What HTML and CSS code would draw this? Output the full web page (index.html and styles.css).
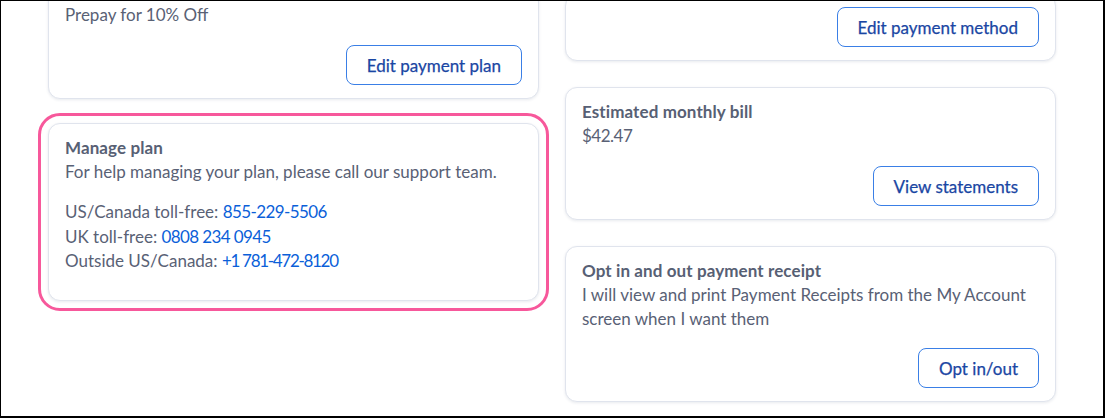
FILE: index.html
```html
<!DOCTYPE html>
<html lang="en">
<head>
<meta charset="utf-8">
<title>Billing</title>
<link rel="stylesheet" href="styles.css">
</head>
<body>
<div class="frame">
  <div class="grid">
    <div class="col col-left">
      <section class="card">
        <p class="text">Prepay for 10% Off</p>
        <div class="actions"><button class="btn">Edit payment plan</button></div>
      </section>
      <section class="card card-focus">
        <h3 class="title">Manage plan</h3>
        <p class="text">For help managing your plan, please call our support team.</p>
        <ul class="phones">
          <li>US/Canada toll-free: <a href="#">855-229-5506</a></li>
          <li>UK toll-free: <a href="#">0808 234 0945</a></li>
          <li>Outside US/Canada: <a href="#" class="tight">+1 781-472-8120</a></li>
        </ul>
      </section>
    </div>
    <div class="col col-right">
      <section class="card card-top">
        <div class="actions"><button class="btn">Edit payment method</button></div>
      </section>
      <section class="card">
        <h3 class="title">Estimated monthly bill</h3>
        <p class="text amount">$42.47</p>
        <div class="actions"><button class="btn">View statements</button></div>
      </section>
      <section class="card">
        <h3 class="title">Opt in and out payment receipt</h3>
        <p class="text">I will view and print Payment Receipts from the My Account screen when I want them</p>
        <div class="actions actions-tight"><button class="btn">Opt in/out</button></div>
      </section>
    </div>
  </div>
</div>
</body>
</html>
```
FILE: styles.css
```css
* { box-sizing: border-box; }
html, body { margin: 0; padding: 0; background: #fff; }
body {
  font-family: Lato, "Liberation Sans", sans-serif;
  font-size: 17px;
  line-height: 24px;
  color: #596175;
}
.frame {
  width: 1105px;
  height: 418px;
  border-style: solid;
  border-color: #000;
  border-width: 1px 2px 2px 1px;
  overflow: hidden;
  background: #fff;
}
.grid {
  display: grid;
  grid-template-columns: 491px 491px;
  column-gap: 26px;
  padding: 0 47px;
  align-items: start;
}
.col { display: flex; flex-direction: column; }
.col-left { margin-top: -11px; gap: 24px; }
.col-right { margin-top: -7px; gap: 26px; }
.card {
  background: #fff;
  border: 1px solid #e0e4ed;
  border-radius: 12px;
  box-shadow: 0 1px 3px rgba(30, 50, 90, 0.10);
  padding: 12px 16px 13px;
  display: flex;
  flex-direction: column;
}
.card-focus {
  outline: 3px solid #f7589b;
  outline-offset: 7px;
  padding-bottom: 26px;
}
.title {
  margin: 0;
  font-size: 17px;
  line-height: 24px;
  font-weight: 700;
  color: #576074;
  letter-spacing: 0.1px;
}
.text { margin: 0; }
.amount { letter-spacing: -0.5px; }
.phones {
  list-style: none;
  margin: 16px 0 0;
  padding: 0;
}
.phones li { line-height: 24.5px; }
.phones a {
  color: #0b5fd9;
  text-decoration: none;
  letter-spacing: -0.6px;
}
.phones a.tight { letter-spacing: -1.3px; }
.actions {
  display: flex;
  justify-content: flex-end;
  margin-top: 18px;
}
.card-top .actions { margin-top: 0; }
.actions-tight { margin-top: 17px; }
.btn {
  font-family: inherit;
  font-size: 17px;
  height: 40px;
  padding: 0 20px;
  background: #fff;
  border: 1px solid #3a7fe6;
  border-radius: 8px;
  color: #1a46a3;
  -webkit-text-stroke: 0.25px #1a46a3;
  cursor: pointer;
}
```
